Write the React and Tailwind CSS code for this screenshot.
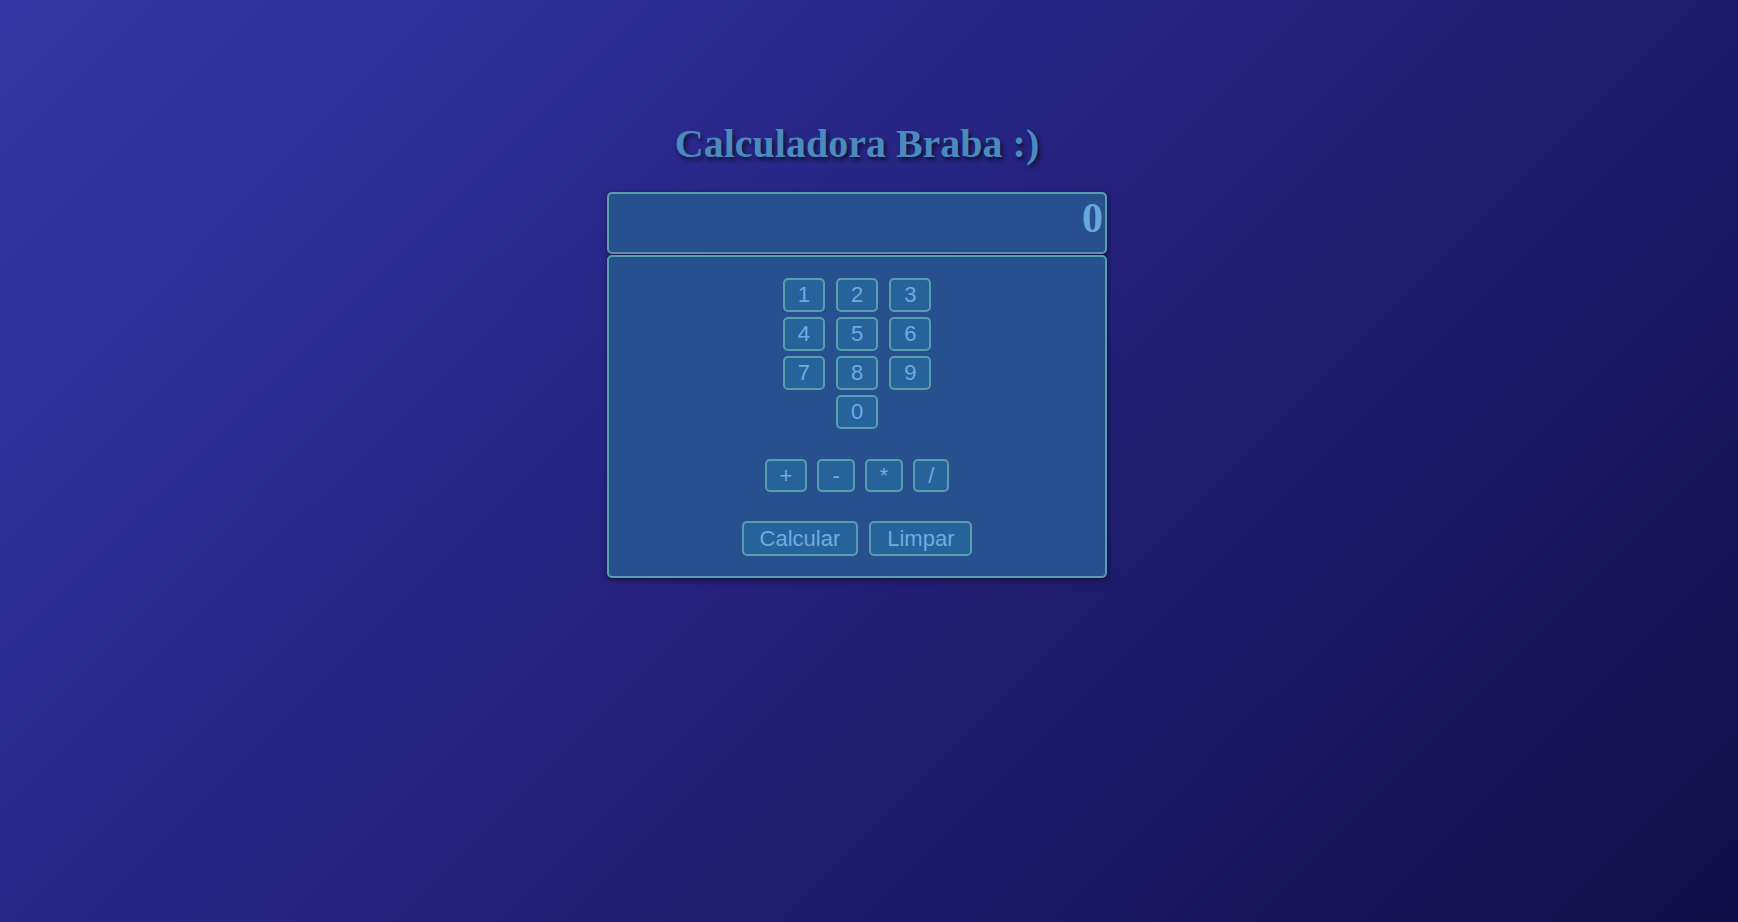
import React, { useState } from 'react';

const rows = [['1', '2', '3'], ['4', '5', '6'], ['7', '8', '9'], ['0']];
const ops = ['+', '-', '*', '/'];

const keyClass = 'rounded-[5px] border-2 border-[#5a9eae] bg-[#27639b] px-[13px] text-[22px] leading-none text-[#6cace0] hover:bg-[#2d6ca8]';

export default function App() {
  const [display, setDisplay] = useState('0');

  const press = (value) => {
    setDisplay((current) => (current === '0' ? value : current + value));
  };

  const calcular = () => {
    try {
      // expressão simples só com números e operadores
      const result = Function(`return (${display})`)();
      setDisplay(String(result));
    } catch (err) {
      setDisplay('Erro');
    }
  };

  return (
    <div className="min-h-[922px] w-full bg-[linear-gradient(135deg,#3636a6_0%,#25237f_45%,#110e48_100%)] pr-[24px] pt-[120px] font-['Liberation_Sans',Arial,sans-serif]">
      <h1 className="text-center font-['Liberation_Serif','Times_New_Roman',serif] text-[40px] font-bold leading-[48px] text-[#4b8abc] [text-shadow:2px_3px_4px_rgba(0,0,0,0.6)]">
        Calculadora Braba :)
      </h1>

      <div className="mx-auto mt-[24px] w-[500px]">
        <div className="flex h-[62px] items-start justify-end overflow-hidden rounded-[5px] border-2 border-[#5a9eae] bg-[#27508f] pr-[2px] shadow-[0_2px_6px_rgba(0,0,0,0.45)]">
          <span className="font-['Liberation_Serif','Times_New_Roman',serif] text-[42px] font-bold leading-[48px] text-[#6aa8dc]">{display}</span>
        </div>

        <div className="mt-px flex h-[323px] flex-col items-center rounded-[5px] border-2 border-[#5a9eae] bg-[#27508f] pt-[21px] shadow-[0_2px_6px_rgba(0,0,0,0.45)]">
          <div className="flex flex-col items-center gap-[5px]">
            {rows.map((row, i) => (
              <div key={i} className="flex gap-[11px]">
                {row.map((n) => (
                  <button key={n} onClick={() => press(n)} className={`h-[34px] ${keyClass}`}>{n}</button>
                ))}
              </div>
            ))}
          </div>

          <div className="mt-[30px] flex gap-[10px]">
            {ops.map((op) => (
              <button key={op} onClick={() => press(op)} className={`h-[33px] ${keyClass}`}>{op}</button>
            ))}
          </div>

          <div className="mt-[29px] flex gap-[11px]">
            <button onClick={calcular} className="h-[35px] rounded-[5px] border-2 border-[#5a9eae] bg-[#27639b] px-4 text-[22px] leading-none text-[#6cace0] hover:bg-[#2d6ca8]">Calcular</button>
            <button onClick={() => setDisplay('0')} className="h-[35px] rounded-[5px] border-2 border-[#5a9eae] bg-[#27639b] px-4 text-[22px] leading-none text-[#6cace0] hover:bg-[#2d6ca8]">Limpar</button>
          </div>
        </div>
      </div>
    </div>
  );
}
